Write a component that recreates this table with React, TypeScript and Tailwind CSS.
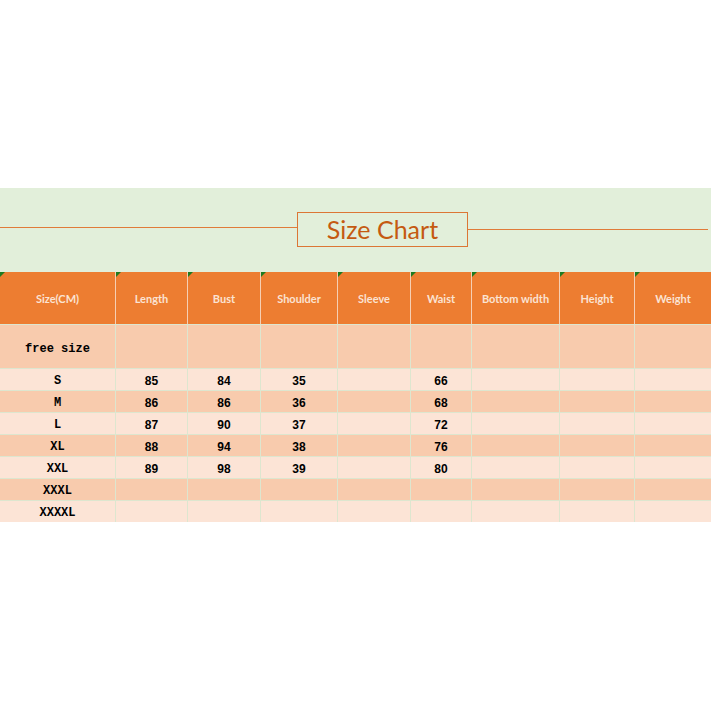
import React from 'react';

const COLS = ['Size(CM)', 'Length', 'Bust', 'Shoulder', 'Sleeve', 'Waist', 'Bottom width', 'Height', 'Weight'];

const ROWS: { size: string; values: string[]; tall?: boolean }[] = [
  { size: 'free size', values: [], tall: true },
  { size: 'S', values: ['85', '84', '35', '', '66'] },
  { size: 'M', values: ['86', '86', '36', '', '68'] },
  { size: 'L', values: ['87', '90', '37', '', '72'] },
  { size: 'XL', values: ['88', '94', '38', '', '76'] },
  { size: 'XXL', values: ['89', '98', '39', '', '80'] },
  { size: 'XXXL', values: [] },
  { size: 'XXXXL', values: [] },
];

const GRID = 'grid grid-cols-[115px_72px_73px_77px_73px_61px_88px_75px_77px]';

function Marker() {
  return (
    <span className="absolute left-0 top-0 h-0 w-0 border-r-[5px] border-t-[5px] border-r-transparent border-t-[#1f7a1f]" />
  );
}

export default function App() {
  return (
    <div className="h-[711px] w-[711px] bg-white">
      <div className="h-[188px]" />

      <div className="flex h-[84px] items-start bg-[#e2efda]">
        <div className="mt-[39px] h-px w-[297px] bg-[#e07b39]" />
        <div
          className="mt-[24px] flex h-[35px] w-[171px] items-center justify-center border border-[#dc7635] text-[25px] leading-none text-[#c55a11]"
          style={{ fontFamily: 'Lato, "Open Sans", sans-serif' }}
        >
          Size Chart
        </div>
        <div className="mt-[41px] h-px w-[240px] bg-[#e07b39]" />
      </div>

      <div className={`${GRID} h-[52px] bg-[#ed7d31]`}>
        {COLS.map((c, i) => (
          <div
            key={c}
            className={`relative flex items-center justify-center pt-[3px] text-[11px] font-bold text-[#fbe3d3] ${i > 0 ? 'border-l border-[#f6cfb4]' : ''}`}
            style={{ fontFamily: 'Lato, "Liberation Sans", sans-serif' }}
          >
            <Marker />
            {c}
          </div>
        ))}
      </div>

      {ROWS.map((r, ri) => (
        <div
          key={r.size}
          className={`${GRID} ${r.tall ? 'h-[44px]' : 'h-[22px]'} ${ri % 2 === 0 ? 'bg-[#f8cbad]' : 'bg-[#fce4d6]'}`}
        >
          {COLS.map((_, ci) => (
            <div
              key={ci}
              className={`flex items-center justify-center border-t border-[#dde6cf] text-black ${ci > 0 ? 'border-l' : ''} ${r.tall ? 'pt-[4px]' : 'pt-[3px]'}`}
            >
              {ci === 0 ? (
                <span className="text-[12px] font-bold" style={{ fontFamily: '"Liberation Mono", monospace' }}>
                  {r.size}
                </span>
              ) : (
                <span className="text-[12px] font-bold" style={{ fontFamily: '"Liberation Sans", sans-serif' }}>
                  {r.values[ci - 1] ?? ''}
                </span>
              )}
            </div>
          ))}
        </div>
      ))}
    </div>
  );
}
